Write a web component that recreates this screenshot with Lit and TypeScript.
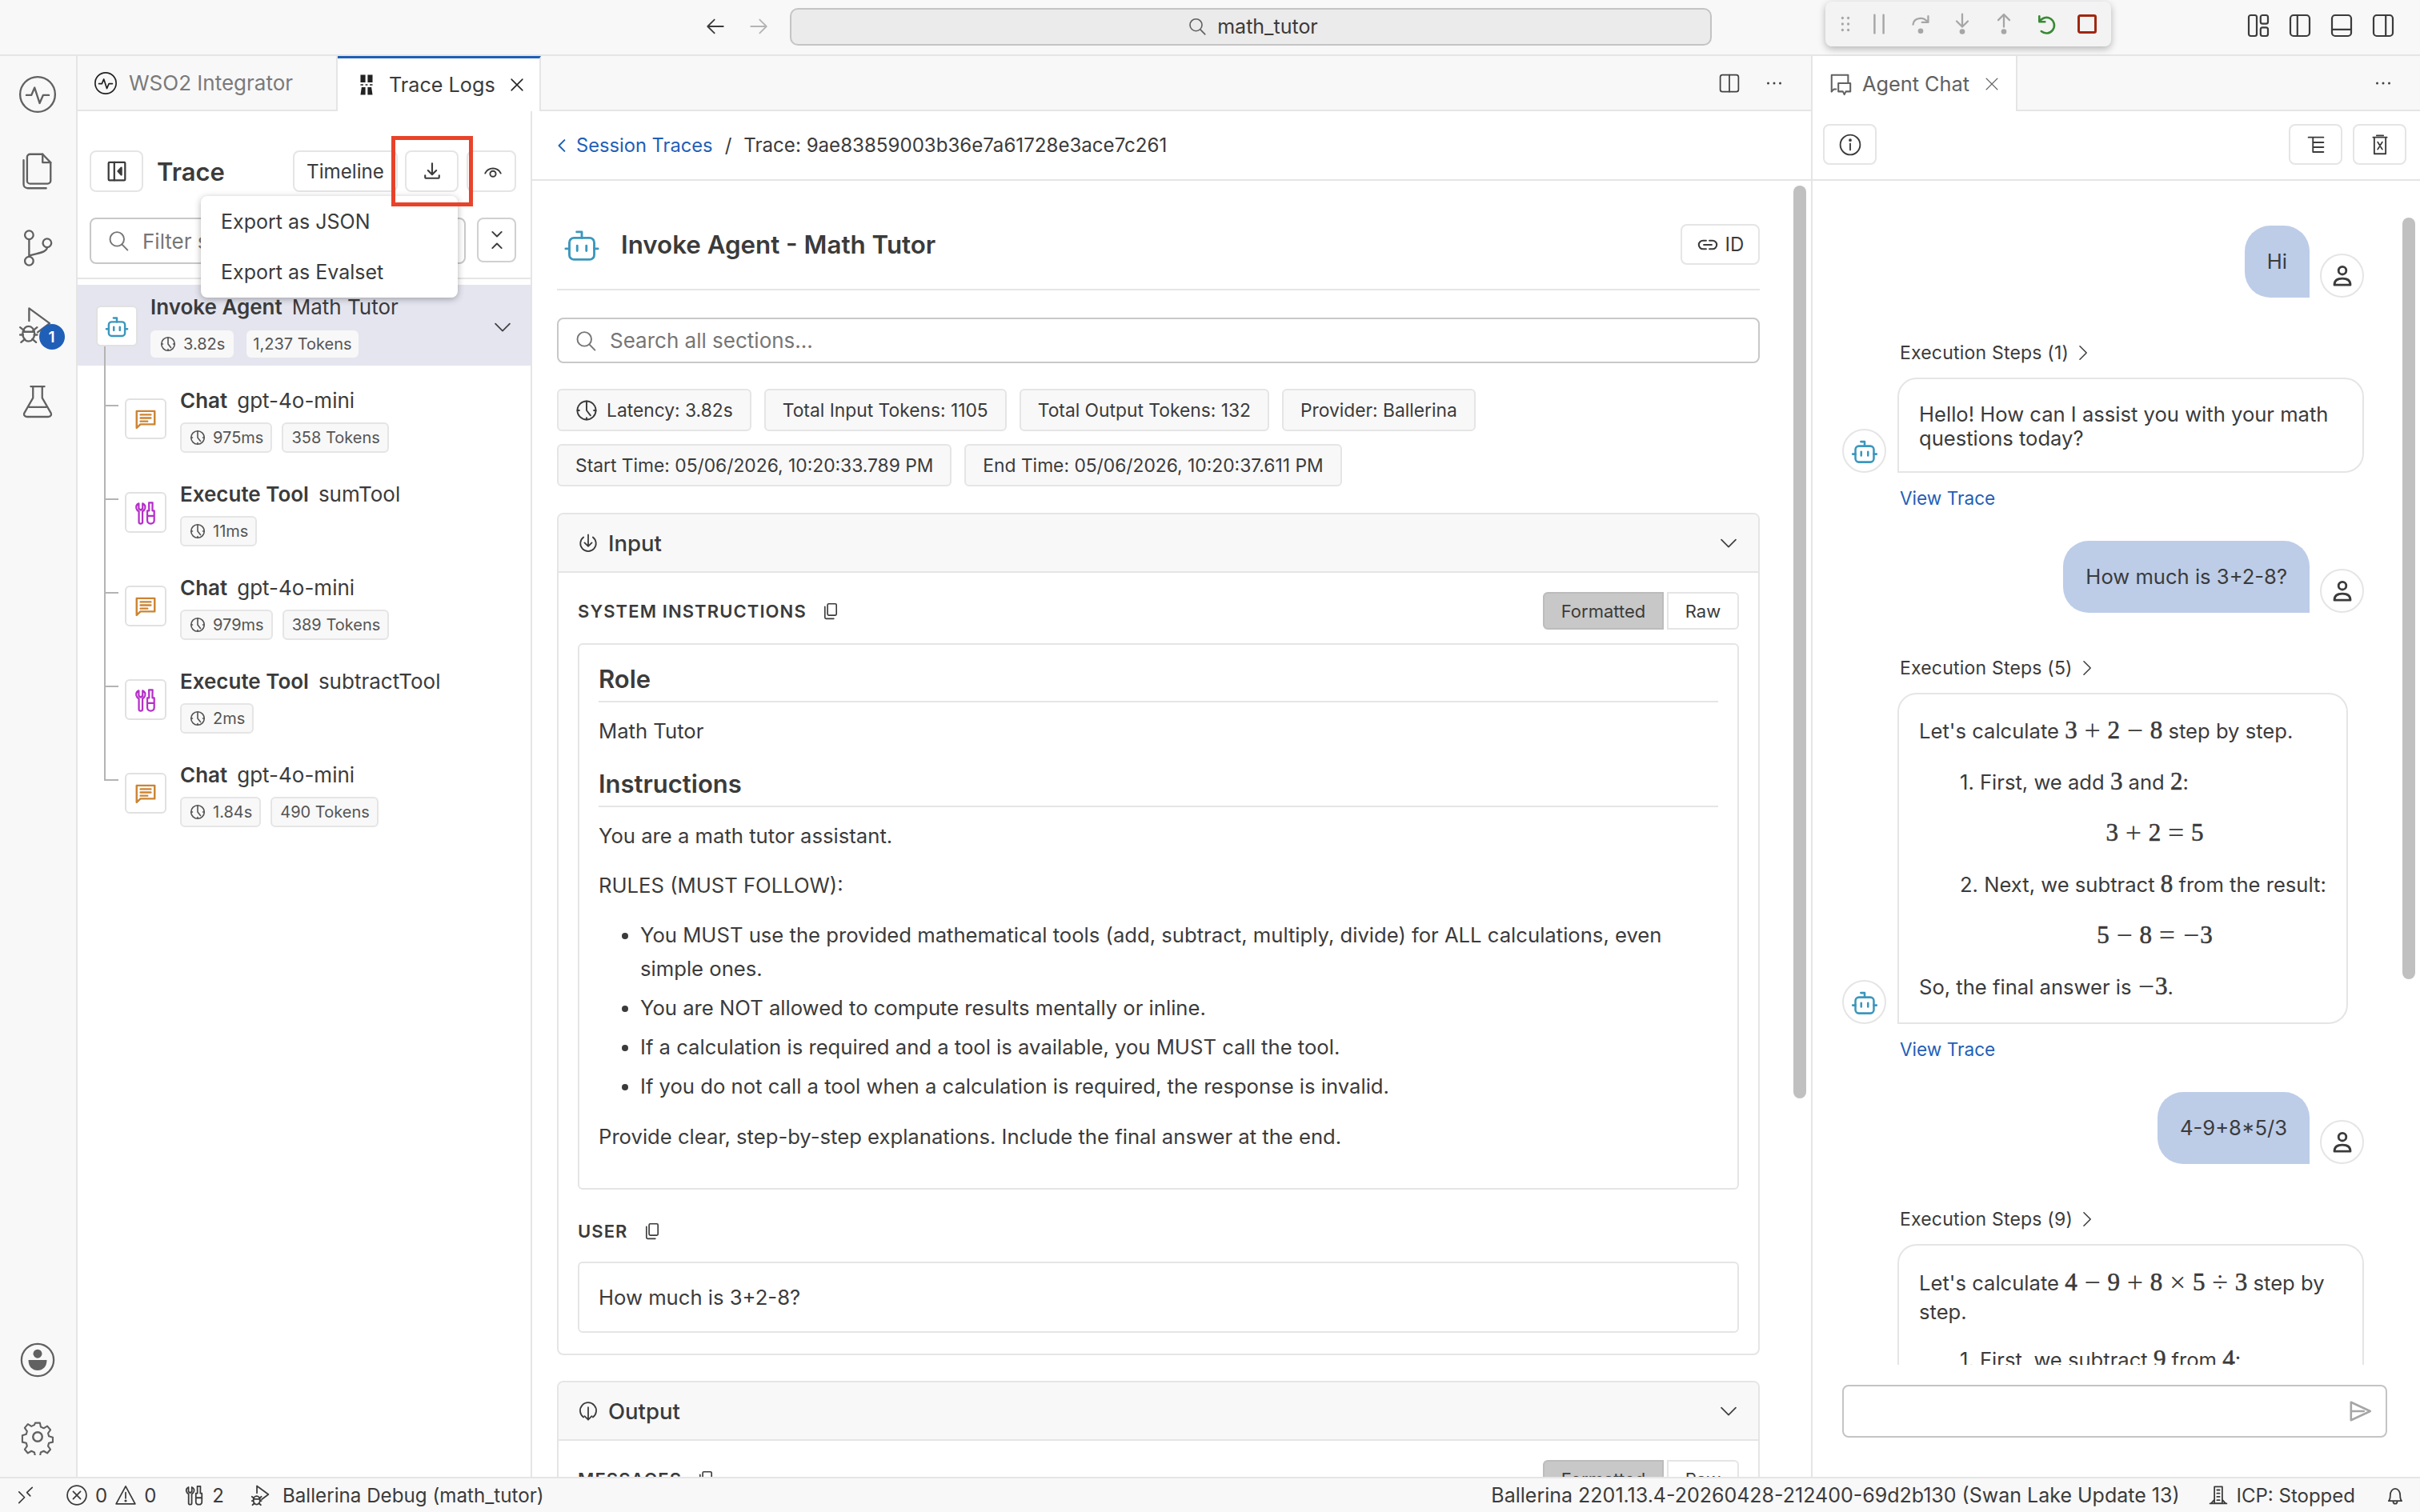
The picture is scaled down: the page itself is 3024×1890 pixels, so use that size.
import { LitElement, html, css, svg, SVGTemplateResult } from 'lit';
import { customElement } from 'lit/decorators.js';

const ico = (size: number, body: SVGTemplateResult, w = 1.1) => html`<svg
  class="ico"
  width=${size}
  height=${size}
  viewBox="0 0 16 16"
  fill="none"
  stroke="currentColor"
  stroke-width=${w}
  stroke-linecap="round"
  stroke-linejoin="round"
>${body}</svg>`;

const I = {
  pulse: svg`<circle cx="8" cy="8" r="7"/><path d="M3.5 8.3h2l1.3-3 2 6.2 1.4-3.2h2.3"/>`,
  files: svg`<path d="M5 1.2h5l3.2 3.3v7.3a1.2 1.2 0 0 1-1.2 1.2H5A1.2 1.2 0 0 1 3.8 11.8V2.4A1.2 1.2 0 0 1 5 1.2z"/><path d="M10 1.2v3.3h3.2"/><path d="M2.4 3.6v9.6a1.6 1.6 0 0 0 1.6 1.6h7.4"/>`,
  branch: svg`<circle cx="4.6" cy="2.8" r="1.7"/><circle cx="4.6" cy="13.2" r="1.7"/><circle cx="11.8" cy="6" r="1.7"/><path d="M4.6 4.5v7M11.8 7.7c0 2.2-4 2.3-7.2 3.4"/>`,
  debug: svg`<path d="M4.6 6.4V1.4l8.2 6-4.8 3.6"/><ellipse cx="4.4" cy="11.6" rx="2.4" ry="3"/><path d="M1 9l1.6 1.3M1 12h1.2M1.4 15l1.5-1.3M7.8 9L6.2 10.3M7.8 12H6.6M7.4 15l-1.5-1.3M2.2 10.8h4.4"/>`,
  beaker: svg`<path d="M5 1.4h6M6 1.4v5L2.3 12.8c-.5 1 0 1.8 1.1 1.8h9.2c1.1 0 1.6-.8 1.1-1.8L10 6.4v-5M4.3 10.4h7.4"/>`,
  account: svg`<circle cx="8" cy="8" r="7"/><circle cx="8" cy="5.3" r="1.9" fill="currentColor" stroke="none"/><path d="M4 8h8c0 3-1.8 4.5-4 4.5S4 11 4 8z" fill="currentColor" stroke="none"/>`,
  gear: svg`<circle cx="8" cy="8" r="2"/><path d="M6.8 1h2.4l.4 2 1.5.7 1.8-1.1 1.6 1.9-1.2 1.7.4 1.5 2 .6v2.4l-2 .5-.4 1.5 1.2 1.7-1.6 1.9-1.8-1.1-1.5.7-.4 2H6.8l-.4-2-1.5-.7-1.8 1.1-1.6-1.9 1.2-1.7-.4-1.5-2-.5V7.3l2-.6.4-1.5-1.2-1.7 1.6-1.9 1.8 1.1 1.5-.7z" transform="translate(1.1 1.1) scale(.86)"/>`,
  search: svg`<circle cx="7" cy="6.8" r="5"/><path d="M10.6 10.6l3.9 4"/>`,
  back: svg`<path d="M14 8H2.2M7.2 2.8L2 8l5.2 5.2"/>`,
  fwd: svg`<path d="M2 8h11.8M8.8 2.8L14 8l-5.2 5.2"/>`,
  close: svg`<path d="M3 3l10 10M13 3L3 13"/>`,
  more: svg`<circle cx="3" cy="8" r="1" fill="currentColor" stroke="none"/><circle cx="8" cy="8" r="1" fill="currentColor" stroke="none"/><circle cx="13" cy="8" r="1" fill="currentColor" stroke="none"/>`,
  split: svg`<rect x="1.5" y="2" width="13" height="12" rx="1.5"/><path d="M8 2v12"/>`,
  layout: svg`<rect x="2" y="1.5" width="5" height="13" rx="1.2"/><rect x="9.4" y="1.5" width="4.6" height="5.3" rx="1.2"/><rect x="9.4" y="9.2" width="4.6" height="5.3" rx="1.2"/>`,
  sideL: svg`<rect x="2" y="1.5" width="12" height="13" rx="2"/><path d="M6.4 1.5v13"/>`,
  panel: svg`<rect x="2" y="1.5" width="12" height="13" rx="2"/><path d="M2 10.4h12"/>`,
  sideR: svg`<rect x="2" y="1.5" width="12" height="13" rx="2"/><path d="M9.6 1.5v13"/>`,
  sidebar: svg`<rect x="2.5" y="2" width="11" height="12" rx=".6"/><path d="M6.3 2v12"/><path d="M11 5.6L8.8 8l2.2 2.4z" fill="currentColor"/>`,
  download: svg`<path d="M8 2v8.4M4.8 7.4L8 10.6l3.2-3.2M2.6 11.2v1.2c0 .6.5 1 1 1h8.8c.5 0 1-.4 1-1v-1.2"/>`,
  eye: svg`<path d="M2 9.6C4.4 4.6 11.6 4.6 14 9.6"/><circle cx="8" cy="10" r="2.2"/>`,
  expand: svg`<path d="M4.5 1.8L8 5.2l3.5-3.4M4.5 14.2L8 10.8l3.5 3.4"/>`,
  chevD: svg`<path d="M2.5 5.3L8 10.8l5.5-5.5"/>`,
  chevR: svg`<path d="M5.3 2.5L10.8 8l-5.5 5.5"/>`,
  chevL: svg`<path d="M10.7 2.5L5.2 8l5.5 5.5"/>`,
  clock: svg`<circle cx="8" cy="8" r="6.6"/><path d="M8 1.4V8l2.8 3.6M1.4 8h1.4M13.2 8h1.4M8 13.2v1.4"/>`,
  robot: svg`<rect x="2.6" y="5" width="10.8" height="9.4" rx="2"/><path d="M8 5V2.4H5.8M1 9.7h1.6M13.4 9.7H15"/><path d="M6 8.4v2.2M10 8.4v2.2"/>`,
  chat: svg`<path d="M2 2.6h12v8.8H4.5L2 13.8z"/><path d="M4.6 5h6.8M4.6 7.2h6.8M4.6 9.4h4.6"/>`,
  tools: svg`<path d="M3.4 1.8v3.4l1.3 1 1.3-1V1.8C7.4 2.5 8 3.8 7.6 5.1 7.2 6.2 6.4 6.8 5.9 7v7.3c0 .5-.4.9-1.2.9s-1.2-.4-1.2-.9V7C2.9 6.8 2.1 6.2 1.8 5.1 1.5 3.8 2 2.5 3.4 1.8z"/><path d="M10.2 1.2h2.4l-.1 5.4h1.2v6.4c0 1.3-1 2.2-2.3 2.2s-2.3-.9-2.3-2.2V6.6h1.2zM9.1 10h4.6"/>`,
  link: svg`<path d="M6.8 5H4.6a3 3 0 0 0 0 6h2.2M9.2 5h2.2a3 3 0 0 1 0 6H9.2M5.2 8h5.6"/>`,
  inputI: svg`<path d="M4.4 3.4a6 6 0 1 0 7.2 0M8 1.4v8.8M5.2 7.6L8 10.4l2.8-2.8"/>`,
  outputI: svg`<path d="M4.4 12.6a6.2 6.2 0 1 1 7.2 0M8 5v9.6M5.2 11.8L8 14.6l2.8-2.8"/>`,
  copy: svg`<rect x="5.4" y="1.8" width="7.4" height="9.6" rx="1"/><path d="M3.2 4.2v9c0 .6.4 1 1 1h6.4"/>`,
  info: svg`<circle cx="8" cy="8" r="6.6"/><path d="M8 7.2v4.2"/><circle cx="8" cy="4.9" r=".5" fill="currentColor"/>`,
  log: svg`<path d="M3 3h10M6 3v9.6M6 6.4h7M6 9.6h7M6 12.8h7"/>`,
  trash: svg`<path d="M5.8 1.8h4.4M3.4 3h9.2M4.2 3v11h7.6V3M6.5 6.2l3 4.8M9.5 6.2l-3 4.8"/>`,
  person: svg`<circle cx="8" cy="4.6" r="2.4"/><path d="M3 13.6c0-2.8 2-4 5-4s5 1.2 5 4z"/>`,
  send: svg`<path d="M2.4 2.4L14.4 8 2.4 13.6zM2.4 8h8" stroke-width="1.3"/>`,
  remote: svg`<path d="M2 5l5 5-5 5M14 1L9.2 5.6l3 3"/>`,
  error: svg`<circle cx="8" cy="8" r="6.8"/><path d="M5.4 5.4l5.2 5.2M10.6 5.4l-5.2 5.2"/>`,
  warn: svg`<path d="M8 1.6l6.8 12.6H1.2zM8 6v4.2"/><circle cx="8" cy="12" r=".4" fill="currentColor"/>`,
  bell: svg`<path d="M3 12.4c1-1 1.2-2 1.2-4.4 0-2.8 1.6-5 3.8-5s3.8 2.2 3.8 5c0 2.4.2 3.4 1.2 4.4zM6.4 12.6c0 1.2.7 2 1.6 2s1.6-.8 1.6-2"/>`,
  server: svg`<path d="M5 1.5h6v12.8H5zM1.6 14.4h12.8M7 4h2M7 6.6h2M7 9.2h2M7 11.8h2M5 11.4L2.4 14.4M11 11.4l2.6 3"/>`,
  grip: svg`<g fill="currentColor" stroke="none"><circle cx="5.6" cy="3" r="1.1"/><circle cx="10.4" cy="3" r="1.1"/><circle cx="5.6" cy="8" r="1.1"/><circle cx="10.4" cy="8" r="1.1"/><circle cx="5.6" cy="13" r="1.1"/><circle cx="10.4" cy="13" r="1.1"/></g>`,
  pause: svg`<path d="M4.8 1.5v13M11.2 1.5v13" stroke-width="1.4"/>`,
  stepOver: svg`<path d="M2.6 8.4C3 3.4 10 2.4 13 6.6M13.4 2.4v4.4H9" stroke-width="1.3"/><circle cx="8" cy="13" r="1.9" fill="currentColor" stroke="none"/>`,
  stepInto: svg`<path d="M8 1v8.6M4 6l4 4 4-4" stroke-width="1.3"/><circle cx="8" cy="13.4" r="1.9" fill="currentColor" stroke="none"/>`,
  stepOut: svg`<path d="M8 10V1.4M4 5.2l4-4 4 4" stroke-width="1.3"/><circle cx="8" cy="13.4" r="1.9" fill="currentColor" stroke="none"/>`,
  restart: svg`<path d="M3.6 2.4v4h4M3.8 6.2A5.6 5.6 0 1 1 5 13.2" stroke-width="1.5"/>`,
  stop: svg`<rect x="2" y="2" width="12" height="12" rx="1" stroke-width="1.7"/>`,
  traceTab: svg`<g fill="currentColor" stroke="none"><path d="M3.7.9h3.5v5.4H3.7zM8.8.9h3.5v5.4H8.8zM4.5 9.7h2.7v5.4H3.7zM8.8 9.7h2.7l.8 5.4H8.8z"/><path d="M7.2 7.6h1.6v.8H7.2zM3.7 7.6h2v.8h-2zM10.3 7.6h2v.8h-2z"/></g>`,
  agentTab: svg`<path d="M2 13V2h11v5.5"/><path d="M2 13l1.5-1.5H5"/><path d="M6.5 7.5h8V13h-3l-1 2-1-2h-3z"/>`,
};

const TRACE_ROWS = [
  { kind: 'chat', title: 'Chat', name: 'gpt-4o-mini', time: '975ms', tokens: '358 Tokens' },
  { kind: 'tool', title: 'Execute Tool', name: 'sumTool', time: '11ms', tokens: '' },
  { kind: 'chat', title: 'Chat', name: 'gpt-4o-mini', time: '979ms', tokens: '389 Tokens' },
  { kind: 'tool', title: 'Execute Tool', name: 'subtractTool', time: '2ms', tokens: '' },
  { kind: 'chat', title: 'Chat', name: 'gpt-4o-mini', time: '1.84s', tokens: '490 Tokens' },
];

@customElement('app-root')
export class AppRoot extends LitElement {
  static styles = css`
    :host {
      display: flex;
      flex-direction: column;
      width: 3024px;
      height: 1890px;
      overflow: hidden;
      position: relative;
      background: #fff;
      color: #3b3b3b;
      font-family: Inter, 'Liberation Sans', sans-serif;
      font-size: 26px;
    }
    * {
      box-sizing: border-box;
    }
    .ico {
      display: block;
      flex: none;
    }
    .titlebar {
      height: 70px;
      flex: none;
      display: flex;
      align-items: center;
      background: #f8f8f8;
      border-bottom: 2px solid #e5e5e5;
      position: relative;
      padding-bottom: 2px;
    }
    .nav {
      display: flex;
      gap: 28px;
      margin-left: 881px;
    }
    .nav .off {
      color: #b4b4b4;
    }
    .cmd {
      margin-left: 26px;
      width: 1152px;
      height: 47px;
      background: #ebebeb;
      border: 2px solid #c4c4c4;
      border-radius: 10px;
      display: flex;
      align-items: center;
      justify-content: center;
      gap: 13px;
      padding-left: 5px;
      font-size: 25px;
    }
    .cmd .ico {
      color: #616161;
    }
    .layout-icons {
      display: flex;
      gap: 20px;
      margin-left: auto;
      margin-right: 30px;
      margin-top: -2px;
    }
    .debugbar {
      position: absolute;
      left: 2281px;
      top: 2px;
      width: 357px;
      height: 56px;
      background: #f3f3f3;
      border-radius: 8px;
      box-shadow: 0 3px 10px rgba(0, 0, 0, 0.28);
      display: flex;
      align-items: center;
      padding-left: 13px;
      gap: 24px;
      color: #a6a6a6;
    }
    .debugbar .grip {
      margin-right: -8px;
    }
    .debugbar .green {
      color: #388a34;
    }
    .debugbar .red {
      color: #a1260d;
    }
    .main {
      flex: 1;
      display: flex;
      min-height: 0;
    }
    .activity {
      width: 97px;
      flex: none;
      background: #f8f8f8;
      border-right: 2px solid #e5e5e5;
      display: flex;
      flex-direction: column;
      align-items: center;
      color: #616161;
      padding: 0 2px 2px 0;
    }
    .activity .item {
      height: 96px;
      display: flex;
      align-items: center;
      justify-content: center;
      position: relative;
    }
    .activity .bottom {
      margin-top: auto;
    }
    .badge {
      position: absolute;
      left: 27px;
      top: 47px;
      width: 32px;
      height: 32px;
      border-radius: 50%;
      background: #1f5fb8;
      color: #fff;
      font-size: 19px;
      font-weight: 600;
      display: flex;
      align-items: center;
      justify-content: center;
    }
    .editor {
      width: 2168px;
      flex: none;
      display: flex;
      flex-direction: column;
      border-right: 2px solid #e5e5e5;
    }
    .side {
      flex: 1;
      min-width: 0;
      display: flex;
      flex-direction: column;
      position: relative;
    }
    .tabbar {
      height: 69px;
      flex: none;
      background: #f8f8f8;
      border-bottom: 2px solid #e5e5e5;
      display: flex;
      align-items: stretch;
    }
    .tab {
      display: flex;
      align-items: center;
      font-size: 26px;
      color: #616161;
      border-right: 2px solid #e5e5e5;
      margin-bottom: -2px;
    }
    .tab.plain {
      width: 325px;
      padding-left: 20px;
      gap: 14px;
      color: #7a7a7a;
      margin-bottom: 0;
    }
    .tab.plain .ico {
      color: #222;
    }
    .tab.active {
      width: 254px;
      background: #fff;
      border-top: 3px solid #1f5fb8;
      padding-left: 22px;
      color: #3b3b3b;
      font-size: 25.2px;
    }
    .tab.active .label {
      margin-left: 14px;
    }
    .tab.active .ico:first-child {
      color: #222;
    }
    .tab.active .x {
      margin-left: 16px;
    }
    .tab.chat {
      width: 256px;
      background: #fff;
      padding-left: 20px;
      color: #616161;
      font-size: 25.3px;
    }
    .tab.chat .label {
      margin-left: 12px;
    }
    .tab.chat .x {
      margin-left: 17px;
    }
    .tab-tools {
      margin-left: auto;
      display: flex;
      align-items: center;
      gap: 30px;
      padding-right: 34px;
      color: #424242;
    }
    .editor-body {
      flex: 1;
      display: flex;
      min-height: 0;
    }
    .trace {
      width: 568px;
      flex: none;
      border-right: 2px solid #e5e5e5;
      display: flex;
      flex-direction: column;
      position: relative;
    }
    .trace-head {
      margin-top: 49px;
      height: 52px;
      display: flex;
      align-items: center;
      padding: 0 18px 0 15px;
    }
    .trace-title {
      font-size: 31px;
      font-weight: 600;
      margin-left: 17px;
      margin-right: auto;
    }
    .btn {
      height: 52px;
      border: 2px solid #e5e5e5;
      border-radius: 8px;
      background: #fff;
      display: flex;
      align-items: center;
      justify-content: center;
      color: #3b3b3b;
      flex: none;
    }
    .btn.timeline {
      width: 131px;
      font-size: 24.2px;
      margin-right: 9px;
    }
    .btn.square {
      width: 67px;
    }
    .btn.eye {
      width: 62px;
      margin-left: 10px;
      padding-left: 4px;
    }
    .filter-row {
      margin-top: 32px;
      padding: 0 18px 0 15px;
      display: flex;
      gap: 14px;
    }
    .filter {
      flex: 1;
      height: 58px;
      border: 2px solid #c8c8c8;
      border-radius: 8px;
      display: flex;
      align-items: center;
      padding-left: 20px;
      gap: 16px;
      color: #767676;
    }
    .btn.expand {
      width: 49px;
      height: 56px;
      border-color: #d0d0d0;
    }
    .tree-divider {
      margin-top: 17px;
      border-top: 2px solid #e5e5e5;
      height: 9px;
    }
    .root-row {
      height: 101px;
      background: #e4e5ef;
      display: flex;
      position: relative;
      padding-left: 23px;
    }
    .node-box {
      width: 52px;
      height: 51px;
      flex: none;
      background: #fff;
      border: 2px solid #e1e1e1;
      border-radius: 6px;
      display: flex;
      align-items: center;
      justify-content: center;
      position: relative;
      z-index: 1;
    }
    .root-row .node-box {
      margin-top: 26px;
    }
    .node-text {
      margin-left: 16px;
    }
    .node-title {
      display: flex;
      gap: 12px;
      height: 32px;
      line-height: 32px;
      font-size: 26px;
      white-space: nowrap;
    }
    .node-title b {
      font-weight: 600;
    }
    .root-row .node-title {
      margin-top: 12px;
    }
    .chips {
      display: flex;
      gap: 12px;
      margin-top: 11px;
    }
    .chip {
      height: 38px;
      display: flex;
      align-items: center;
      gap: 9px;
      padding: 0 9px 0 10px;
      background: #f8f8f8;
      border: 2px solid #e5e5e5;
      border-radius: 6px;
      font-size: 20px;
      color: #555;
      white-space: nowrap;
    }
    .root-row .chips {
      margin-top: 13px;
      gap: 16px;
    }
    .root-row .chip {
      height: 34px;
      border-color: transparent;
    }
    .root-row .chip + .chip {
      padding: 0 6px;
    }
    .root-chev {
      position: absolute;
      right: 22px;
      top: 40px;
      color: #424242;
    }
    .tree {
      position: relative;
      margin-top: 13px;
      padding-left: 59px;
    }
    .tree::before {
      content: '';
      position: absolute;
      left: 33px;
      top: -38px;
      width: 2px;
      height: 542px;
      background: #b4b4b4;
    }
    .tree-row {
      height: 117px;
      padding-top: 15px;
      display: flex;
      position: relative;
    }
    .tree-row::before {
      content: '';
      position: absolute;
      left: -26px;
      top: 36px;
      width: 18px;
      height: 2px;
      background: #b4b4b4;
    }
    .tree-row .node-box {
      margin-top: 13px;
    }
    .tree-row .node-text {
      margin-left: 17px;
    }
    .menu {
      position: absolute;
      left: 154px;
      top: 106px;
      width: 321px;
      height: 127px;
      background: #fff;
      border-radius: 8px;
      box-shadow: 0 2px 8px rgba(0, 0, 0, 0.3);
      padding: 0 25px;
      z-index: 3;
      font-size: 25px;
    }
    .menu div {
      height: 63px;
      display: flex;
      align-items: center;
    }
    .redbox {
      position: absolute;
      left: 392px;
      top: 31px;
      width: 102px;
      height: 88px;
      border: 5px solid #e8432a;
      z-index: 4;
    }
    .detail {
      flex: 1;
      min-width: 0;
      position: relative;
      overflow: hidden;
    }
    .crumbs {
      height: 87px;
      border-bottom: 2px solid #e5e5e5;
      display: flex;
      align-items: center;
      padding-left: 27px;
      font-size: 24.1px;
    }
    .crumbs .link {
      color: #1f5fb8;
      display: flex;
      align-items: center;
      gap: 8px;
      font-size: 23.7px;
    }
    .crumbs .sep {
      margin: 0 15px 0 15px;
    }
    .detail-body {
      padding: 0 0 0 31px;
      width: 1534px;
    }
    .scrollbar {
      position: absolute;
      width: 16px;
      background: #c0c0c0;
      border-radius: 8px;
    }
    .detail .scrollbar {
      right: 6px;
      top: 93px;
      height: 1141px;
    }
    .page-head {
      height: 137px;
      border-bottom: 2px solid #e5e5e5;
      display: flex;
      align-items: center;
      padding-top: 24px;
      padding-left: 8px;
    }
    .page-head h1 {
      margin: 0 0 0 26px;
      font-size: 31.3px;
      font-weight: 600;
    }
    .btn.id {
      width: 99px;
      height: 51px;
      margin-left: auto;
      font-size: 24px;
      gap: 8px;
    }
    .search {
      margin-top: 34px;
      height: 57px;
      border: 2px solid #c8c8c8;
      border-radius: 8px;
      display: flex;
      align-items: center;
      padding-left: 20px;
      gap: 16px;
      color: #767676;
    }
    .meta-rows {
      margin-top: 32px;
      display: flex;
      flex-direction: column;
      gap: 16px;
    }
    .meta-row {
      display: flex;
      gap: 16px;
    }
    .meta {
      height: 53px;
      display: flex;
      align-items: center;
      gap: 11px;
      padding: 0 21px;
      background: #f8f8f8;
      border: 2px solid #e5e5e5;
      border-radius: 6px;
      font-size: 22.8px;
      white-space: nowrap;
    }
    .section {
      margin-top: 33px;
      border: 2px solid #e5e5e5;
      border-radius: 8px;
      overflow: hidden;
    }
    .section + .section {
      margin-top: 32px;
    }
    .section-head {
      height: 75px;
      background: #f8f8f8;
      border-bottom: 2px solid #e5e5e5;
      margin-top: -2px;
      padding: 2px 24px 0;
      display: flex;
      align-items: center;
      gap: 12px;
      font-size: 27.5px;
      font-weight: 500;
    }
    .section-head .end {
      margin-left: auto;
      color: #424242;
    }
    .section-body {
      padding: 24px 24px 26px;
    }
    .label-row {
      height: 47px;
      display: flex;
      align-items: center;
      gap: 18px;
      font-size: 22px;
      font-weight: 600;
      letter-spacing: 1.1px;
    }
    .label-row.user {
      height: 38px;
      margin-top: 33px;
    }
    .seg {
      margin-left: auto;
      display: flex;
      gap: 4px;
      font-size: 22px;
      font-weight: 400;
      letter-spacing: 0;
    }
    .seg div {
      height: 47px;
      width: 90px;
      display: flex;
      align-items: center;
      justify-content: center;
      border: 2px solid #e5e5e5;
      border-radius: 0 6px 6px 0;
    }
    .seg div.on {
      width: 151px;
      background: #c8c8c8;
      border-color: #bcbcbc;
      border-radius: 6px 0 0 6px;
    }
    .md-box {
      margin-top: 17px;
      height: 683px;
      border: 2px solid #e5e5e5;
      border-radius: 6px;
      padding: 22px 24px 0;
      font-size: 25.65px;
    }
    .md-box h3 {
      margin: 0;
      height: 50px;
      line-height: 42px;
      font-size: 31px;
      font-weight: 600;
      border-bottom: 2px solid #e5e5e5;
    }
    .md-box p {
      margin: 20px 0 0;
      line-height: 32px;
    }
    .md-box h3.next {
      margin-top: 29px;
    }
    .md-box p.gap {
      margin-top: 30px;
    }
    .md-box ul {
      margin: 25px 0 26px;
      padding-left: 52px;
      line-height: 42px;
    }
    .md-box li + li {
      margin-top: 7px;
    }
    .user-box {
      margin-top: 19px;
      height: 89px;
      border: 2px solid #e5e5e5;
      border-radius: 6px;
      display: flex;
      align-items: center;
      padding-left: 24px;
      font-size: 25.65px;
    }
    .side-tools {
      height: 87px;
      flex: none;
      border-bottom: 2px solid #e5e5e5;
      display: flex;
      align-items: center;
      padding: 0 17px 2px 13px;
      gap: 13px;
    }
    .side-tools .btn:first-child {
      margin-right: auto;
    }
    .btn.tool {
      width: 67px;
      height: 51px;
    }
    .chat-area {
      height: 1480px;
      flex: none;
      overflow: hidden;
      padding: 56px 70px 0 37px;
      font-size: 25.6px;
    }
    .side .scrollbar {
      right: 6px;
      top: 202px;
      height: 952px;
    }
    .user-msg {
      display: flex;
      justify-content: flex-end;
      align-items: flex-end;
      gap: 13px;
    }
    .bubble-user {
      background: #bdcde8;
      border-radius: 32px 32px 0 32px;
      padding: 30px 28px;
      line-height: 30px;
    }
    .avatar {
      width: 55px;
      height: 55px;
      border-radius: 50%;
      border: 2px solid #e5e5e5;
      display: flex;
      align-items: center;
      justify-content: center;
      flex: none;
    }
    .avatar.bot {
      color: #3b97bd;
    }
    .steps {
      margin: 54px 0 16px 72px;
      height: 30px;
      display: flex;
      align-items: center;
      gap: 6px;
      font-size: 23px;
      letter-spacing: 0.2px;
    }
    .bot-msg {
      display: flex;
      align-items: flex-end;
      gap: 14px;
    }
    .bubble-bot {
      border: 2px solid #e5e5e5;
      border-radius: 24px 24px 24px 0;
      padding: 29px 25px 26px;
      line-height: 30px;
      flex: 1;
    }
    .bubble-bot.steps-bubble {
      flex: none;
      width: 563px;
      padding: 31px 25px 29px;
      display: flex;
      flex-direction: column;
      gap: 34px;
      white-space: nowrap;
    }
    .bubble-bot.long {
      padding-top: 29px;
      line-height: 36px;
      height: 300px;
      border-bottom: none;
    }
    .bubble-bot.long .item-line {
      margin-top: 24px;
    }
    .item-line {
      margin-left: 51px;
    }
    .eq {
      margin-left: 80px;
      text-align: center;
    }
    .m {
      font-family: 'Liberation Serif', serif;
      font-size: 31px;
      line-height: 0;
      -webkit-text-stroke: 0.6px currentColor;
    }
    .m i {
      font-style: normal;
      font-size: 36px;
      margin: 0 1px;
      vertical-align: -2px;
      -webkit-text-stroke: 0;
    }
    .view-trace {
      margin: 17px 0 0 72px;
      line-height: 30px;
      font-size: 22.6px;
      color: #1f5fb8;
    }
    .next-msg {
      margin-top: 38px;
    }
    .chat-input {
      margin: 25px 0 0 37px;
      width: 681px;
      height: 66px;
      border: 2px solid #c4c4c4;
      border-radius: 8px;
      display: flex;
      align-items: center;
      justify-content: flex-end;
      padding-right: 16px;
      color: #a6a6a6;
    }
    .statusbar {
      height: 44px;
      flex: none;
      background: #f8f8f8;
      border-top: 2px solid #e5e5e5;
      display: flex;
      align-items: center;
      font-size: 24px;
      padding-left: 21px;
      white-space: nowrap;
    }
    .statusbar .errors {
      margin-left: 39px;
    }
    .statusbar .num {
      margin: 0 9px;
    }
    .statusbar .tools-item {
      margin-left: 26px;
    }
    .statusbar .debug-item {
      margin-left: 24px;
    }
    .statusbar .debug-name {
      margin-left: 12px;
      font-size: 24.2px;
    }
    .statusbar .right {
      margin-left: auto;
      display: flex;
      align-items: center;
    }
    .statusbar .version {
      font-size: 25px;
      margin-right: 35px;
    }
    .statusbar .icp {
      margin-left: 10px;
      margin-right: 37px;
    }
    .statusbar .bell {
      margin-right: 18px;
    }
  `;

  private node(kind: string) {
    if (kind === 'chat') return html`<div class="node-box" style="color:#cc8433">${ico(30, I.chat, 1.3)}</div>`;
    if (kind === 'tool') return html`<div class="node-box" style="color:#b52fc9">${ico(30, I.tools, 1.2)}</div>`;
    return html`<div class="node-box" style="color:#3b97bd">${ico(30, I.robot, 1.3)}</div>`;
  }

  private renderTitlebar() {
    return html`
      <div class="titlebar">
        <div class="nav">${ico(26, I.back)}<span class="off">${ico(26, I.fwd)}</span></div>
        <div class="cmd">${ico(24, I.search)}<span>math_tutor</span></div>
        <div class="layout-icons">
          ${ico(32, I.layout)}${ico(32, I.sideL)}${ico(32, I.panel)}${ico(32, I.sideR)}
        </div>
        <div class="debugbar">
          <span class="grip">${ico(24, I.grip)}</span>${ico(28, I.pause)}${ico(28, I.stepOver)}${ico(28, I.stepInto)}${ico(28, I.stepOut)}
          <span class="green">${ico(28, I.restart)}</span>
          <span class="red">${ico(28, I.stop)}</span>
        </div>
      </div>
    `;
  }

  private renderActivity() {
    return html`
      <div class="activity">
        <div class="item">${ico(50, I.pulse, 0.75)}</div>
        <div class="item">${ico(50, I.files, 0.75)}</div>
        <div class="item">${ico(50, I.branch, 0.75)}</div>
        <div class="item">${ico(50, I.debug, 0.75)}<span class="badge">1</span></div>
        <div class="item">${ico(46, I.beaker, 0.8)}</div>
        <div class="item bottom">${ico(46, I.account, 0.8)}</div>
        <div class="item">${ico(46, I.gear, 0.85)}</div>
      </div>
    `;
  }

  private renderTree() {
    return html`
      <div class="trace">
        <div class="trace-head">
          <div class="btn square">${ico(30, I.sidebar, 1.2)}</div>
          <div class="trace-title">Trace</div>
          <div class="btn timeline">Timeline</div>
          <div class="btn square">${ico(26, I.download, 1.3)}</div>
          <div class="btn eye">${ico(26, I.eye, 1.2)}</div>
        </div>
        <div class="filter-row">
          <div class="filter">${ico(28, I.search)}<span>Filter spans...</span></div>
          <div class="btn expand">${ico(26, I.expand, 1.2)}</div>
        </div>
        <div class="tree-divider"></div>
        <div class="root-row">
          ${this.node('agent')}
          <div class="node-text">
            <div class="node-title"><b>Invoke Agent</b><span>Math Tutor</span></div>
            <div class="chips">
              <div class="chip">${ico(20, I.clock, 1.3)}3.82s</div>
              <div class="chip">1,237 Tokens</div>
            </div>
          </div>
          <div class="root-chev">${ico(26, I.chevD, 1.1)}</div>
        </div>
        <div class="tree">
          ${TRACE_ROWS.map(
            (r) => html`
              <div class="tree-row">
                ${this.node(r.kind)}
                <div class="node-text">
                  <div class="node-title"><b>${r.title}</b><span>${r.name}</span></div>
                  <div class="chips">
                    <div class="chip">${ico(20, I.clock, 1.3)}${r.time}</div>
                    ${r.tokens ? html`<div class="chip">${r.tokens}</div>` : ''}
                  </div>
                </div>
              </div>
            `
          )}
        </div>
        <div class="menu">
          <div>Export as JSON</div>
          <div>Export as Evalset</div>
        </div>
        <div class="redbox"></div>
      </div>
    `;
  }

  private renderDetail() {
    return html`
      <div class="detail">
        <div class="crumbs">
          <span class="link">${ico(20, I.chevL, 1.6)}Session Traces</span>
          <span class="sep">/</span>
          <span>Trace: 9ae83859003b36e7a61728e3ace7c261</span>
        </div>
        <div class="detail-body">
          <div class="page-head">
            <span style="color:#3b97bd">${ico(46, I.robot, 1)}</span>
            <h1>Invoke Agent - Math Tutor</h1>
            <div class="btn id">${ico(28, I.link, 1.2)}ID</div>
          </div>
          <div class="search">${ico(28, I.search)}<span>Search all sections...</span></div>
          <div class="meta-rows">
            <div class="meta-row">
              <div class="meta">${ico(28, I.clock, 1.1)}Latency: 3.82s</div>
              <div class="meta">Total Input Tokens: 1105</div>
              <div class="meta">Total Output Tokens: 132</div>
              <div class="meta">Provider: Ballerina</div>
            </div>
            <div class="meta-row">
              <div class="meta">Start Time: 05/06/2026, 10:20:33.789 PM</div>
              <div class="meta">End Time: 05/06/2026, 10:20:37.611 PM</div>
            </div>
          </div>
          <div class="section">
            <div class="section-head">
              ${ico(26, I.inputI, 1.1)}<span>Input</span><span class="end">${ico(26, I.chevD, 1.1)}</span>
            </div>
            <div class="section-body">
              <div class="label-row">
                <span>SYSTEM INSTRUCTIONS</span>${ico(24, I.copy, 1.1)}
                <div class="seg"><div class="on">Formatted</div><div>Raw</div></div>
              </div>
              <div class="md-box">
                <h3>Role</h3>
                <p>Math Tutor</p>
                <h3 class="next">Instructions</h3>
                <p>You are a math tutor assistant.</p>
                <p class="gap">RULES (MUST FOLLOW):</p>
                <ul>
                  <li>You MUST use the provided mathematical tools (add, subtract, multiply, divide) for ALL calculations, even simple ones.</li>
                  <li>You are NOT allowed to compute results mentally or inline.</li>
                  <li>If a calculation is required and a tool is available, you MUST call the tool.</li>
                  <li>If you do not call a tool when a calculation is required, the response is invalid.</li>
                </ul>
                <p>Provide clear, step-by-step explanations. Include the final answer at the end.</p>
              </div>
              <div class="label-row user"><span>USER</span>${ico(24, I.copy, 1.1)}</div>
              <div class="user-box">How much is 3+2-8?</div>
            </div>
          </div>
          <div class="section">
            <div class="section-head">
              ${ico(26, I.outputI, 1.1)}<span>Output</span><span class="end">${ico(26, I.chevD, 1.1)}</span>
            </div>
            <div class="section-body">
              <div class="label-row">
                <span>MESSAGES</span>${ico(24, I.copy, 1.1)}
                <div class="seg"><div class="on">Formatted</div><div>Raw</div></div>
              </div>
            </div>
          </div>
        </div>
        <div class="scrollbar"></div>
      </div>
    `;
  }

  private userMsg(text: string, next = true) {
    return html`
      <div class="user-msg ${next ? 'next-msg' : ''}">
        <div class="bubble-user">${text}</div>
        <div class="avatar">${ico(32, I.person, 1.4)}</div>
      </div>
    `;
  }

  private steps(n: number) {
    return html`<div class="steps"><span>Execution Steps (${n})</span>${ico(24, I.chevR, 1)}</div>`;
  }

  private renderChat() {
    const bot = html`<div class="avatar bot">${ico(34, I.robot, 1.2)}</div>`;
    return html`
      <div class="side">
        <div class="tabbar">
          <div class="tab chat">
            ${ico(30, I.agentTab, 1.1)}
            <span class="label">Agent Chat</span><span class="x">${ico(22, I.close, 1)}</span>
          </div>
          <div class="tab-tools">${ico(24, I.more)}</div>
        </div>
        <div class="side-tools">
          <div class="btn tool">${ico(30, I.info, 1)}</div>
          <div class="btn tool">${ico(30, I.log, 1)}</div>
          <div class="btn tool">${ico(30, I.trash, 1)}</div>
        </div>
        <div class="chat-area">
          ${this.userMsg('Hi', false)}
          ${this.steps(1)}
          <div class="bot-msg">
            ${bot}
            <div class="bubble-bot">Hello! How can I assist you with your math questions today?</div>
          </div>
          <div class="view-trace">View Trace</div>
          ${this.userMsg('How much is 3+2-8?')}
          ${this.steps(5)}
          <div class="bot-msg">
            ${bot}
            <div class="bubble-bot steps-bubble">
              <div>Let's calculate <span class="m">3 <i>+</i> 2 <i>−</i> 8</span> step by step.</div>
              <div class="item-line">1. First, we add <span class="m">3</span> and <span class="m">2</span>:</div>
              <div class="eq"><span class="m">3 <i>+</i> 2 <i>=</i> 5</span></div>
              <div class="item-line">2. Next, we subtract <span class="m">8</span> from the result:</div>
              <div class="eq"><span class="m">5 <i>−</i> 8 <i>=</i> <i>−</i>3</span></div>
              <div>So, the final answer is <span class="m"><i>−</i>3</span>.</div>
            </div>
          </div>
          <div class="view-trace">View Trace</div>
          ${this.userMsg('4-9+8*5/3')}
          ${this.steps(9)}
          <div class="bot-msg">
            <div style="width:55px;flex:none"></div>
            <div class="bubble-bot long">
              <div>Let's calculate <span class="m">4 <i>−</i> 9 <i>+</i> 8 <i>×</i> 5 <i>÷</i> 3</span> step by step.</div>
              <div class="item-line">1. First, we subtract <span class="m">9</span> from <span class="m">4</span>:</div>
            </div>
          </div>
        </div>
        <div class="chat-input">${ico(32, I.send)}</div>
        <div class="scrollbar"></div>
      </div>
    `;
  }

  render() {
    return html`
      ${this.renderTitlebar()}
      <div class="main">
        ${this.renderActivity()}
        <div class="editor">
          <div class="tabbar">
            <div class="tab plain">${ico(30, I.pulse, 0.9)}<span>WSO2 Integrator</span></div>
            <div class="tab active">
              ${ico(28, I.traceTab)}<span class="label">Trace Logs</span><span class="x">${ico(22, I.close, 1.1)}</span>
            </div>
            <div class="tab-tools">${ico(28, I.split, 1)}${ico(24, I.more)}</div>
          </div>
          <div class="editor-body">${this.renderTree()}${this.renderDetail()}</div>
        </div>
        ${this.renderChat()}
      </div>
      <div class="statusbar">
        ${ico(22, I.remote, 1.2)}
        <span class="errors"></span>${ico(28, I.error, 1)}<span class="num">0</span>${ico(28, I.warn, 1)}<span class="num">0</span>
        <span class="tools-item"></span>${ico(26, I.tools, 1.1)}<span class="num">2</span>
        <span class="debug-item"></span>${ico(28, I.debug, 1)}<span class="debug-name">Ballerina Debug (math_tutor)</span>
        <div class="right">
          <span class="version">Ballerina 2201.13.4-20260428-212400-69d2b130 (Swan Lake Update 13)</span>
          ${ico(26, I.server, 1.1)}<span class="icp">ICP: Stopped</span>
          <span class="bell">${ico(26, I.bell, 1.1)}</span>
        </div>
      </div>
    `;
  }
}
